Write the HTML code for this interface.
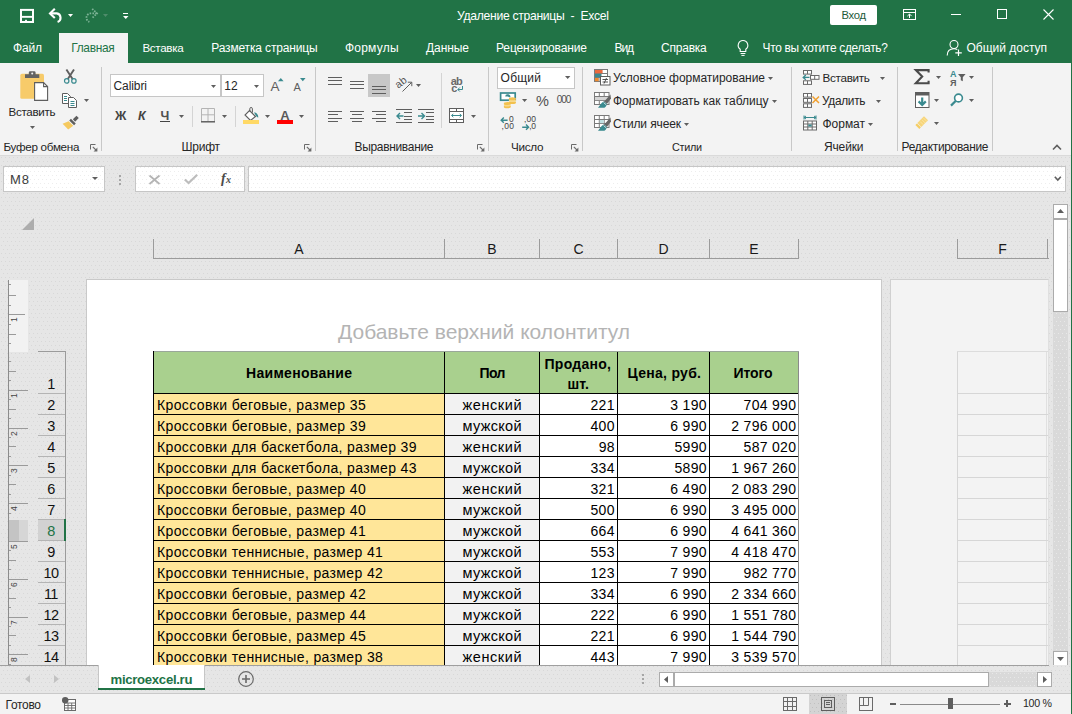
<!DOCTYPE html>
<html lang="ru">
<head>
<meta charset="utf-8">
<title>Excel</title>
<style>
*{box-sizing:border-box;margin:0;padding:0}
html,body{width:1072px;height:714px;overflow:hidden;background:#f3f3f3}
body{font-family:"Liberation Sans",sans-serif;font-size:12px;color:#262626;position:relative}
.abs{position:absolute}
svg{overflow:visible}
.t{position:absolute;white-space:pre;line-height:1}
</style>
</head>
<body>
<!-- TITLE BAR -->
<div class="abs" style="left:0px;top:0px;width:1072px;height:63px;background:#217346;"></div>
<div class="abs" style="left:59px;top:33px;width:69px;height:30px;background:#f3f3f3;"></div>
<svg class="abs" style="left:19px;top:8px;" width="16" height="16" viewBox="0 0 16 16"><rect x="2" y="1.9" width="12" height="12.1" fill="none" stroke="#fff" stroke-width="2"/><rect x="3" y="7.9" width="10" height="1.9" fill="#fff"/><rect x="6.1" y="11.8" width="1.8" height="2" fill="#fff"/></svg>
<svg class="abs" style="left:48px;top:8px;" width="16" height="15" viewBox="0 0 16 15"><path d="M2.2 5.4H8.8A4.4 4.4 0 0 1 9.6 13.9" fill="none" stroke="#fff" stroke-width="2.1"/><path d="M6.8 0.8L2 5.4L6.8 10" fill="none" stroke="#fff" stroke-width="2.1"/></svg>
<svg class="abs" style="left:68px;top:14px;" width="5" height="3" viewBox="0 0 5 3"><path d="M0 0H5L2.5 3Z" fill="#fff"/></svg>
<svg class="abs" style="left:83px;top:8px;" width="16" height="15" viewBox="0 0 16 15"><path d="M13.8 5.4H7.2A4.4 4.4 0 0 0 6.4 13.9" fill="none" stroke="#7db396" stroke-width="1.8" stroke-dasharray="1.6 1.2"/><path d="M9.2 0.8L14 5.4L9.2 10" fill="none" stroke="#7db396" stroke-width="1.8" stroke-dasharray="1.6 1.2"/></svg>
<svg class="abs" style="left:103px;top:14px;" width="5" height="3" viewBox="0 0 5 3"><path d="M0 0H5L2.5 3Z" fill="#4f8c6b"/></svg>
<div class="abs" style="left:122.5px;top:12.5px;width:5.5px;height:1.2px;background:#fff;"></div>
<svg class="abs" style="left:122.5px;top:15.5px;" width="5.5" height="3.0" viewBox="0 0 5.5 3.0"><path d="M0 0H5.5L2.75 3.0Z" fill="#fff"/></svg>
<span class="t" style="left:457.00px;top:10.00px;font-size:12.16px;color:#fff;letter-spacing:-0.301px;">Удаление страницы  -  Excel</span>
<div class="abs" style="left:830px;top:5px;width:47px;height:19.5px;background:#fff;border-radius:2px;"></div>
<span class="t" style="left:841.50px;top:10.00px;font-size:11.23px;color:#1e5a3a;letter-spacing:-0.302px;">Вход</span>
<svg class="abs" style="left:903px;top:9px;" width="13" height="11" viewBox="0 0 13 11"><rect x="0.5" y="0.5" width="12" height="10" fill="none" stroke="#fff" stroke-width="1"/><path d="M0.5 3.5H12.5" stroke="#fff" stroke-width="1"/><path d="M6.5 9V5.2M4.4 7.1L6.5 5L8.6 7.1" fill="none" stroke="#fff" stroke-width="1"/></svg>
<div class="abs" style="left:951px;top:14px;width:10px;height:1px;background:#fff;"></div>
<div class="abs" style="left:997px;top:9px;width:10px;height:10px;border:1px solid #fff"></div>
<svg class="abs" style="left:1042.5px;top:9px;" width="11" height="11" viewBox="0 0 11 11"><path d="M0.5 0.5L10.5 10.5M10.5 0.5L0.5 10.5" stroke="#fff" stroke-width="1.1"/></svg>
<span class="t" style="left:13.00px;top:42.00px;font-size:12px;color:#fff;letter-spacing:-0.167px;">Файл</span>
<span class="t" style="left:71.20px;top:43.00px;font-size:11.93px;color:#217346;letter-spacing:-0.301px;">Главная</span>
<span class="t" style="left:142.40px;top:42.00px;font-size:11.6px;color:#fff;letter-spacing:-0.303px;">Вставка</span>
<span class="t" style="left:211.20px;top:42.00px;font-size:12px;color:#fff;letter-spacing:-0.148px;">Разметка страницы</span>
<span class="t" style="left:345.00px;top:42.00px;font-size:12px;color:#fff;letter-spacing:0.214px;">Формулы</span>
<span class="t" style="left:426.00px;top:42.00px;font-size:12px;color:#fff;letter-spacing:-0.071px;">Данные</span>
<span class="t" style="left:496.00px;top:42.00px;font-size:12px;color:#fff;letter-spacing:-0.128px;">Рецензирование</span>
<span class="t" style="left:614.50px;top:42.00px;font-size:12px;color:#fff;letter-spacing:-1.105px;">Вид</span>
<span class="t" style="left:661.00px;top:42.00px;font-size:12px;color:#fff;letter-spacing:-0.221px;">Справка</span>
<svg class="abs" style="left:736px;top:39px;" width="14" height="18" viewBox="0 0 14 18"><path d="M7 1.5A4.8 4.8 0 0 0 4.2 10.2V12.5H9.8V10.2A4.8 4.8 0 0 0 7 1.5Z" fill="none" stroke="#fff" stroke-width="1.1"/><path d="M4.6 14.5H9.4M5.4 16.4H8.6" stroke="#fff" stroke-width="1"/></svg>
<span class="t" style="left:762.50px;top:43.00px;font-size:11.92px;color:#fff;letter-spacing:-0.299px;">Что вы хотите сделать?</span>
<svg class="abs" style="left:946px;top:39px;" width="18" height="18" viewBox="0 0 18 18"><circle cx="8" cy="5.5" r="4" fill="none" stroke="#fff" stroke-width="1.1"/><path d="M1.2 16.5C1.2 12 4 9.8 8 9.8C9.5 9.8 10.5 10.1 11.3 10.6" fill="none" stroke="#fff" stroke-width="1.1"/><path d="M12.5 10.5V17M9.3 13.8H15.8" stroke="#fff" stroke-width="1.2"/></svg>
<span class="t" style="left:966.50px;top:42.00px;font-size:12px;color:#fff;letter-spacing:-0.011px;">Общий доступ</span>
<!-- RIBBON -->
<div class="abs" style="left:0px;top:63px;width:1072px;height:92px;background:#f3f3f3;"></div>
<div class="abs" style="left:0px;top:154.5px;width:1072px;height:1px;background:#dadada;"></div>
<svg class="abs" style="left:20px;top:70px;" width="29" height="32" viewBox="0 0 29 32"><rect x="0.3" y="3.8" width="23.7" height="25" rx="1.6" fill="#f7cb6a"/><path d="M5 7.9V4.2H8.8V2.6A1.4 1.4 0 0 1 10.2 1.2H14.2A1.4 1.4 0 0 1 15.6 2.6V4.2H19.3V7.9Z" fill="#636363"/><circle cx="12.2" cy="3.5" r="1" fill="#f3f3f3"/><path d="M14.6 12.6H23.6L27.6 16.6V30.4H14.6Z" fill="#fff" stroke="#5e5e5e" stroke-width="1.1"/><path d="M23.6 12.6V16.6H27.6" fill="none" stroke="#5e5e5e" stroke-width="1.1"/></svg>
<span class="t" style="left:8.50px;top:107.00px;font-size:11.58px;color:#262626;letter-spacing:-0.298px;">Вставить</span>
<svg class="abs" style="left:30px;top:126px;" width="5" height="3" viewBox="0 0 5 3"><path d="M0 0H5L2.5 3Z" fill="#5e5e5e"/></svg>
<svg class="abs" style="left:63px;top:69px;" width="15" height="16" viewBox="0 0 15 16"><path d="M3.4 0.6L9.6 10M11 0.6L4.8 10" stroke="#5e5e5e" stroke-width="1.9" fill="none"/><circle cx="3.7" cy="11.9" r="2.2" fill="none" stroke="#3a8a8f" stroke-width="1.2"/><circle cx="10.9" cy="11.9" r="2.2" fill="none" stroke="#3a8a8f" stroke-width="1.2"/></svg>
<svg class="abs" style="left:62px;top:92.6px;" width="16" height="15" viewBox="0 0 16 15"><path d="M0.5 0.5H5.5L8.5 3.5V10.5H0.5Z" fill="#fff" stroke="#5e5e5e"/><path d="M6.5 4.5H11.5L14.5 7.5V14.5H6.5Z" fill="#fff" stroke="#5e5e5e"/><path d="M2 3.5H5M2 5.5H5M2 7.5H5M8.5 8.5H12.5M8.5 10.5H12.5M8.5 12.5H12.5" stroke="#3a8a8f" stroke-width="1"/></svg>
<svg class="abs" style="left:84px;top:99px;" width="5" height="3" viewBox="0 0 5 3"><path d="M0 0H5L2.5 3Z" fill="#5e5e5e"/></svg>
<svg class="abs" style="left:62px;top:115px;" width="17" height="16" viewBox="0 0 17 16"><path d="M15.6 1.9L12 5.5" stroke="#5e5e5e" stroke-width="3.2" fill="none"/><path d="M8.1 4.6L12.9 9.4" stroke="#5e5e5e" stroke-width="2.4" fill="none"/><path d="M6.6 6.2L11.2 10.8L6.2 14.6L0.6 8.8Z" fill="#f5c95f"/></svg>
<span class="t" style="left:3.50px;top:141.00px;font-size:11.67px;color:#262626;letter-spacing:-0.300px;">Буфер обмена</span>
<svg class="abs" style="left:90px;top:144px;" width="8" height="8" viewBox="0 0 8 8"><path d="M0.5 5.5V0.5H5.5" fill="none" stroke="#6a6a6a" stroke-width="1"/><path d="M2.8 2.8L6 6" fill="none" stroke="#6a6a6a" stroke-width="1.1"/><path d="M7.4 3.6V7.4H3.6Z" fill="#6a6a6a"/></svg>
<div class="abs" style="left:101px;top:67px;width:1px;height:84px;background:#c8c8c8;"></div>
<div class="abs" style="left:110px;top:74px;width:111px;height:23px;background:#fff;border:1px solid #c6c6c6"></div>
<div class="abs" style="left:221px;top:74px;width:43px;height:23px;background:#fff;border:1px solid #c6c6c6"></div>
<span class="t" style="left:113.50px;top:80.00px;font-size:12px;color:#262626;letter-spacing:-0.085px;">Calibri</span>
<svg class="abs" style="left:211px;top:84.5px;" width="5" height="3" viewBox="0 0 5 3"><path d="M0 0H5L2.5 3Z" fill="#5e5e5e"/></svg>
<span class="t" style="left:224.30px;top:80.00px;font-size:12px;color:#262626;">12</span>
<svg class="abs" style="left:254px;top:84.5px;" width="5" height="3" viewBox="0 0 5 3"><path d="M0 0H5L2.5 3Z" fill="#5e5e5e"/></svg>
<span class="t" style="left:270.50px;top:80.00px;font-size:13.5px;color:#5e5e5e;letter-spacing:0.495px;">A</span>
<svg class="abs" style="left:277.8px;top:77.8px;" width="5.6" height="3.2" viewBox="0 0 5.6 3.2"><path d="M0 3.2L2.8 0L5.6 3.2Z" fill="#3a8a8f"/></svg>
<span class="t" style="left:293.50px;top:82.00px;font-size:11px;color:#5e5e5e;letter-spacing:0.163px;">A</span>
<svg class="abs" style="left:299.6px;top:77.8px;" width="5.6" height="3.2" viewBox="0 0 5.6 3.2"><path d="M0 0H5.6L2.8 3.2Z" fill="#3a8a8f"/></svg>
<span class="t" style="left:115.00px;top:110.00px;font-size:12.5px;color:#444;letter-spacing:0.702px;font-weight:bold;">Ж</span>
<span class="t" style="left:138.00px;top:110.00px;font-size:12.5px;color:#444;letter-spacing:0.816px;font-weight:bold;font-style:italic;">К</span>
<span class="t" style="left:160.50px;top:110.00px;font-size:12.5px;color:#505050;letter-spacing:-0.283px;font-weight:bold;">Ч</span>
<div class="abs" style="left:160px;top:121px;width:9.5px;height:1.2px;background:#444;"></div>
<svg class="abs" style="left:179px;top:115px;" width="5" height="3" viewBox="0 0 5 3"><path d="M0 0H5L2.5 3Z" fill="#5e5e5e"/></svg>
<div class="abs" style="left:192px;top:106px;width:1px;height:21px;background:#d4d4d4;"></div>
<svg class="abs" style="left:201px;top:108px;" width="14" height="15" viewBox="0 0 14 15"><path d="M0.5 0.5H13.5M0.5 0.5V13M13.5 0.5V13M7 0.5V13M0.5 6.8H13.5" stroke="#b4b4b4" stroke-width="1" fill="none"/><path d="M0 13.8H14" stroke="#555" stroke-width="1.4"/></svg>
<svg class="abs" style="left:222px;top:115px;" width="5" height="3" viewBox="0 0 5 3"><path d="M0 0H5L2.5 3Z" fill="#5e5e5e"/></svg>
<div class="abs" style="left:235px;top:106px;width:1px;height:21px;background:#d4d4d4;"></div>
<svg class="abs" style="left:243px;top:107px;" width="17" height="18" viewBox="0 0 17 18"><path d="M6.5 3.5L12.5 9.5L7.5 13.5L2 8Z" fill="#fff" stroke="#5e5e5e" stroke-width="1.1"/><path d="M6.8 4.5V1.8A1.3 1.3 0 0 1 9.4 1.8V5.6" fill="none" stroke="#5e5e5e" stroke-width="1"/><path d="M11 5.5C13.5 5.5 15.5 7.5 15.2 10.8L13.2 9.2Z" fill="#3a8a8f"/><rect x="0" y="13" width="16" height="4" fill="#ffd966"/></svg>
<svg class="abs" style="left:265px;top:115px;" width="5" height="3" viewBox="0 0 5 3"><path d="M0 0H5L2.5 3Z" fill="#5e5e5e"/></svg>
<span class="t" style="left:280.20px;top:109.00px;font-size:13px;color:#5a5a5a;letter-spacing:1.012px;font-weight:bold;">A</span>
<div class="abs" style="left:277px;top:120px;width:16px;height:4px;background:#f00;"></div>
<svg class="abs" style="left:299px;top:115px;" width="5" height="3" viewBox="0 0 5 3"><path d="M0 0H5L2.5 3Z" fill="#5e5e5e"/></svg>
<span class="t" style="left:181.50px;top:141.00px;font-size:12px;color:#262626;letter-spacing:-0.245px;">Шрифт</span>
<svg class="abs" style="left:304px;top:144px;" width="8" height="8" viewBox="0 0 8 8"><path d="M0.5 5.5V0.5H5.5" fill="none" stroke="#6a6a6a" stroke-width="1"/><path d="M2.8 2.8L6 6" fill="none" stroke="#6a6a6a" stroke-width="1.1"/><path d="M7.4 3.6V7.4H3.6Z" fill="#6a6a6a"/></svg>
<div class="abs" style="left:315px;top:67px;width:1px;height:84px;background:#c8c8c8;"></div>
<div class="abs" style="left:328px;top:77px;width:14px;height:1px;background:#5e5e5e;"></div>
<div class="abs" style="left:328px;top:80px;width:14px;height:1px;background:#5e5e5e;"></div>
<div class="abs" style="left:328px;top:84px;width:14px;height:1px;background:#5e5e5e;"></div>
<div class="abs" style="left:350px;top:81px;width:14px;height:1px;background:#5e5e5e;"></div>
<div class="abs" style="left:350px;top:84px;width:14px;height:1px;background:#5e5e5e;"></div>
<div class="abs" style="left:350px;top:88px;width:14px;height:1px;background:#5e5e5e;"></div>
<div class="abs" style="left:368px;top:74px;width:22px;height:22.5px;background:#c8c8c8;"></div>
<div class="abs" style="left:372px;top:86px;width:14px;height:1px;background:#5e5e5e;"></div>
<div class="abs" style="left:372px;top:89px;width:14px;height:1px;background:#5e5e5e;"></div>
<div class="abs" style="left:372px;top:93px;width:14px;height:1px;background:#5e5e5e;"></div>
<svg class="abs" style="left:396px;top:76px;" width="17" height="17" viewBox="0 0 17 17">"<text x="0" y="10" font-size="10.5" font-family="Liberation Sans" fill="#555" transform="rotate(-38 5 8)">ab</text><path d="M6.5 15.5L15.5 6.5M15.8 10.2V6.2H11.8" fill="none" stroke="#5e5e5e" stroke-width="1"/></svg>
<svg class="abs" style="left:416.3px;top:84px;" width="5" height="3" viewBox="0 0 5 3"><path d="M0 0H5L2.5 3Z" fill="#5e5e5e"/></svg>
<div class="abs" style="left:441px;top:73px;width:1px;height:55px;background:#d4d4d4;"></div>
<span class="t" style="left:450.80px;top:76.00px;font-size:11px;color:#6a6a6a;letter-spacing:-0.837px;font-weight:bold;">ab</span>
<span class="t" style="left:451.30px;top:83.00px;font-size:11px;color:#6a6a6a;font-weight:bold;">c</span>
<svg class="abs" style="left:457px;top:86px;" width="6" height="6" viewBox="0 0 6 6"><path d="M5.5 0V3.5H1M2.8 1.5L0.8 3.5L2.8 5.5" fill="none" stroke="#3a8a8f" stroke-width="1"/></svg>
<div class="abs" style="left:328px;top:111px;width:14px;height:1px;background:#5e5e5e;"></div>
<div class="abs" style="left:328px;top:114px;width:10px;height:1px;background:#5e5e5e;"></div>
<div class="abs" style="left:328px;top:118px;width:14px;height:1px;background:#5e5e5e;"></div>
<div class="abs" style="left:328px;top:121px;width:10px;height:1px;background:#5e5e5e;"></div>
<div class="abs" style="left:350px;top:111px;width:14px;height:1px;background:#5e5e5e;"></div>
<div class="abs" style="left:352px;top:114px;width:10px;height:1px;background:#5e5e5e;"></div>
<div class="abs" style="left:350px;top:118px;width:14px;height:1px;background:#5e5e5e;"></div>
<div class="abs" style="left:352px;top:121px;width:10px;height:1px;background:#5e5e5e;"></div>
<div class="abs" style="left:372px;top:111px;width:14px;height:1px;background:#5e5e5e;"></div>
<div class="abs" style="left:376px;top:114px;width:10px;height:1px;background:#5e5e5e;"></div>
<div class="abs" style="left:372px;top:118px;width:14px;height:1px;background:#5e5e5e;"></div>
<div class="abs" style="left:376px;top:121px;width:10px;height:1px;background:#5e5e5e;"></div>
<div class="abs" style="left:396px;top:109px;width:16px;height:1px;background:#5e5e5e;"></div>
<div class="abs" style="left:404px;top:112px;width:8px;height:1px;background:#5e5e5e;"></div>
<div class="abs" style="left:404px;top:116px;width:8px;height:1px;background:#5e5e5e;"></div>
<div class="abs" style="left:404px;top:119px;width:8px;height:1px;background:#5e5e5e;"></div>
<div class="abs" style="left:396px;top:122px;width:16px;height:1px;background:#5e5e5e;"></div>
<svg class="abs" style="left:396px;top:112px;" width="8" height="8" viewBox="0 0 8 8"><path d="M7.5 4H1M4 1L1 4L4 7" fill="none" stroke="#3a8a8f" stroke-width="1.4"/></svg>
<div class="abs" style="left:418px;top:109px;width:16px;height:1px;background:#5e5e5e;"></div>
<div class="abs" style="left:426px;top:112px;width:8px;height:1px;background:#5e5e5e;"></div>
<div class="abs" style="left:426px;top:116px;width:8px;height:1px;background:#5e5e5e;"></div>
<div class="abs" style="left:426px;top:119px;width:8px;height:1px;background:#5e5e5e;"></div>
<div class="abs" style="left:418px;top:122px;width:16px;height:1px;background:#5e5e5e;"></div>
<svg class="abs" style="left:418px;top:112px;" width="8" height="8" viewBox="0 0 8 8"><path d="M0 4H6.5M3.5 1L6.5 4L3.5 7" fill="none" stroke="#3a8a8f" stroke-width="1.4"/></svg>
<svg class="abs" style="left:449px;top:108px;" width="15" height="15" viewBox="0 0 15 15"><rect x="0.5" y="0.5" width="14" height="14" fill="#fff" stroke="#5e5e5e"/><path d="M0.5 3.5H14.5M0.5 11.5H14.5M7.5 0.5V3.5M7.5 11.5V14.5" stroke="#5e5e5e" fill="none"/><path d="M2.6 7.5H12.4M4.3 5.8L2.6 7.5L4.3 9.2M10.7 5.8L12.4 7.5L10.7 9.2" stroke="#3a8a8f" fill="none" stroke-width="1"/></svg>
<svg class="abs" style="left:471px;top:115px;" width="5" height="3" viewBox="0 0 5 3"><path d="M0 0H5L2.5 3Z" fill="#5e5e5e"/></svg>
<span class="t" style="left:354.50px;top:142.00px;font-size:11.96px;color:#262626;letter-spacing:-0.302px;">Выравнивание</span>
<svg class="abs" style="left:477px;top:144px;" width="8" height="8" viewBox="0 0 8 8"><path d="M0.5 5.5V0.5H5.5" fill="none" stroke="#6a6a6a" stroke-width="1"/><path d="M2.8 2.8L6 6" fill="none" stroke="#6a6a6a" stroke-width="1.1"/><path d="M7.4 3.6V7.4H3.6Z" fill="#6a6a6a"/></svg>
<div class="abs" style="left:488px;top:67px;width:1px;height:84px;background:#c8c8c8;"></div>
<div class="abs" style="left:497px;top:67px;width:78px;height:22px;background:#fff;border:1px solid #c6c6c6"></div>
<span class="t" style="left:500.60px;top:72.00px;font-size:12px;color:#262626;letter-spacing:0.228px;">Общий</span>
<svg class="abs" style="left:565px;top:76px;" width="5.4" height="3.0" viewBox="0 0 5.4 3.0"><path d="M0 0H5.4L2.7 3.0Z" fill="#5e5e5e"/></svg>
<svg class="abs" style="left:499px;top:92px;" width="18" height="17" viewBox="0 0 18 17"><rect x="1.6" y="1" width="14.6" height="7.2" fill="#fff" stroke="#3a8a8f" stroke-width="1.7"/><path d="M6.2 4.6A2.6 2.4 0 1 1 11.2 5.6L8.8 4.6Z" fill="#3a8a8f"/><ellipse cx="13.4" cy="10.6" rx="3.6" ry="1.5" fill="#f2c14e"/><ellipse cx="13.4" cy="8.6" rx="3.6" ry="1.5" fill="#f7d98c"/><ellipse cx="13.4" cy="6.8" rx="3.6" ry="1.5" fill="#f2c14e"/><ellipse cx="8.4" cy="14.8" rx="3.6" ry="1.5" fill="#f2c14e"/><ellipse cx="8.4" cy="13" rx="3.6" ry="1.5" fill="#f7d98c"/><ellipse cx="8.4" cy="11.4" rx="3.6" ry="1.5" fill="#f2c14e"/></svg>
<svg class="abs" style="left:522px;top:99px;" width="5.2" height="3.0" viewBox="0 0 5.2 3.0"><path d="M0 0H5.2L2.6 3.0Z" fill="#5e5e5e"/></svg>
<span class="t" style="left:536.00px;top:94.00px;font-size:14.5px;color:#505050;letter-spacing:0.107px;">%</span>
<span class="t" style="left:556.70px;top:95.00px;font-size:10px;color:#505050;letter-spacing:-1.092px;">000</span>
<svg class="abs" style="left:499.5px;top:116.5px;" width="8" height="6.5" viewBox="0 0 8 6.5"><path d="M7.6 3.2H1.2M3.8 0.6L1.2 3.2L3.8 5.8" fill="none" stroke="#3a8a8f" stroke-width="1.4"/></svg>
<span class="t" style="left:509.00px;top:115.00px;font-size:8.5px;color:#444;letter-spacing:0.273px;">0</span>
<span class="t" style="left:501.60px;top:122.00px;font-size:8.5px;color:#444;letter-spacing:0.292px;">,00</span>
<span class="t" style="left:524.10px;top:115.00px;font-size:8.5px;color:#444;letter-spacing:0.042px;">,00</span>
<svg class="abs" style="left:521.8px;top:123.5px;" width="8" height="6.5" viewBox="0 0 8 6.5"><path d="M0.2 3.2H6.6M4 0.6L6.6 3.2L4 5.8" fill="none" stroke="#3a8a8f" stroke-width="1.4"/></svg>
<span class="t" style="left:529.20px;top:122.00px;font-size:8.5px;color:#444;letter-spacing:-0.289px;">,0</span>
<span class="t" style="left:511.00px;top:141.00px;font-size:11.72px;color:#262626;letter-spacing:-0.302px;">Число</span>
<svg class="abs" style="left:571px;top:144px;" width="8" height="8" viewBox="0 0 8 8"><path d="M0.5 5.5V0.5H5.5" fill="none" stroke="#6a6a6a" stroke-width="1"/><path d="M2.8 2.8L6 6" fill="none" stroke="#6a6a6a" stroke-width="1.1"/><path d="M7.4 3.6V7.4H3.6Z" fill="#6a6a6a"/></svg>
<div class="abs" style="left:582px;top:67px;width:1px;height:84px;background:#c8c8c8;"></div>
<svg class="abs" style="left:594px;top:69px;" width="17" height="17" viewBox="0 0 17 17"><rect x="0.5" y="0.5" width="13" height="12" fill="#fff" stroke="#7a7a7a"/><path d="M0.5 4.5H13.5M0.5 8.5H13.5M5 0.5V12.5" stroke="#7a7a7a" fill="none"/><rect x="1" y="1" width="7.6" height="3.2" fill="#ea6a3e"/><rect x="1" y="5" width="6.5" height="3.2" fill="#3a8a8f"/><rect x="1" y="9" width="3.6" height="3.2" fill="#f08a2c"/><rect x="6.5" y="7.5" width="9.5" height="8.5" fill="#fff" stroke="#5e5e5e"/><path d="M8.5 10.5H14M8.5 13H14M12.5 9L10 14.6" stroke="#444" stroke-width="0.9" fill="none"/></svg>
<span class="t" style="left:613.00px;top:72.00px;font-size:12px;color:#262626;letter-spacing:-0.030px;">Условное форматирование</span>
<svg class="abs" style="left:768px;top:76.5px;" width="5" height="3" viewBox="0 0 5 3"><path d="M0 0H5L2.5 3Z" fill="#5e5e5e"/></svg>
<svg class="abs" style="left:594px;top:92px;" width="17" height="17" viewBox="0 0 17 17"><rect x="0.5" y="0.5" width="14.5" height="12" fill="#fff" stroke="#7a7a7a"/><path d="M0.5 4.5H15M0.5 8.5H15M5.3 0.5V12.5M10.2 0.5V12.5" stroke="#7a7a7a" fill="none"/><rect x="1" y="5" width="14" height="3.2" fill="#d5d5d5"/><path d="M16.4 2.6L10.2 9.6L12.9 11.9L17 6.4Z" fill="#666"/><path d="M10 9.6C7 10.5 6.5 13 4 15.8H10.4C12 14.6 12.6 13.4 13 12Z" fill="#3a8a8f"/><path d="M9.6 10.6L12.2 12.8" stroke="#f3f3f3" stroke-width="0.8"/></svg>
<span class="t" style="left:613.00px;top:95.00px;font-size:12px;color:#262626;letter-spacing:-0.026px;">Форматировать как таблицу</span>
<svg class="abs" style="left:772px;top:99.5px;" width="5" height="3" viewBox="0 0 5 3"><path d="M0 0H5L2.5 3Z" fill="#5e5e5e"/></svg>
<svg class="abs" style="left:594px;top:115px;" width="17" height="17" viewBox="0 0 17 17"><rect x="0.5" y="0.5" width="14.5" height="12" fill="#fff" stroke="#7a7a7a"/><path d="M0.5 4.5H15M0.5 8.5H15M5.3 0.5V12.5M10.2 0.5V12.5" stroke="#7a7a7a" fill="none"/><rect x="5.8" y="5" width="4" height="3.2" fill="#bfe0e2"/><path d="M16.4 2.6L10.2 9.6L12.9 11.9L17 6.4Z" fill="#666"/><path d="M10 9.6C7 10.5 6.5 13 4 15.8H10.4C12 14.6 12.6 13.4 13 12Z" fill="#3a8a8f"/><path d="M9.6 10.6L12.2 12.8" stroke="#f3f3f3" stroke-width="0.8"/></svg>
<span class="t" style="left:613.00px;top:118.00px;font-size:12px;color:#262626;letter-spacing:-0.125px;">Стили ячеек</span>
<svg class="abs" style="left:684px;top:122.5px;" width="5" height="3" viewBox="0 0 5 3"><path d="M0 0H5L2.5 3Z" fill="#5e5e5e"/></svg>
<span class="t" style="left:672.00px;top:142.00px;font-size:10.83px;color:#262626;letter-spacing:-0.300px;">Стили</span>
<div class="abs" style="left:791px;top:67px;width:1px;height:84px;background:#c8c8c8;"></div>
<svg class="abs" style="left:802px;top:69.5px;" width="18" height="15" viewBox="0 0 18 15"><rect x="1.5" y="0.5" width="8" height="3.6" fill="#fff" stroke="#6a6a6a"/><path d="M5.5 0.5V4" stroke="#6a6a6a"/><rect x="8.5" y="5.5" width="8.5" height="3.8" fill="#fff" stroke="#6a6a6a"/><path d="M12.7 5.5V9.3" stroke="#6a6a6a"/><rect x="1.5" y="10.8" width="8" height="3.6" fill="#fff" stroke="#6a6a6a"/><path d="M5.5 10.8V14.4" stroke="#6a6a6a"/><path d="M7.5 7.4H1.2M3.8 5L1.2 7.4L3.8 9.8" fill="none" stroke="#3a8a8f" stroke-width="1.3"/></svg>
<span class="t" style="left:822.50px;top:72.00px;font-size:11.7px;color:#262626;letter-spacing:-0.299px;">Вставить</span>
<svg class="abs" style="left:880px;top:76.5px;" width="5" height="3" viewBox="0 0 5 3"><path d="M0 0H5L2.5 3Z" fill="#5e5e5e"/></svg>
<svg class="abs" style="left:802px;top:92.5px;" width="18" height="15" viewBox="0 0 18 15"><rect x="1.5" y="0.5" width="8" height="3.6" fill="#fff" stroke="#6a6a6a"/><path d="M5.5 0.5V4" stroke="#6a6a6a"/><rect x="1.5" y="5.5" width="8" height="3.8" fill="#fff" stroke="#6a6a6a"/><path d="M5.5 5.5V9.3" stroke="#6a6a6a"/><rect x="1.5" y="10.8" width="8" height="3.6" fill="#fff" stroke="#6a6a6a"/><path d="M5.5 10.8V14.4" stroke="#6a6a6a"/><path d="M10.5 3.5L17 10M17 3.5L10.5 10" stroke="#f0a030" stroke-width="1.5"/></svg>
<span class="t" style="left:822.00px;top:96.00px;font-size:11.87px;color:#262626;letter-spacing:-0.303px;">Удалить</span>
<svg class="abs" style="left:876px;top:99.5px;" width="5" height="3" viewBox="0 0 5 3"><path d="M0 0H5L2.5 3Z" fill="#5e5e5e"/></svg>
<svg class="abs" style="left:802px;top:115px;" width="18" height="16" viewBox="0 0 18 16"><path d="M2 2.5H14M2 0.5V4.5M14 0.5V4.5M4 1L2 2.5L4 4M12 1L14 2.5L12 4" stroke="#3a8a8f" fill="none" stroke-width="1"/><rect x="1.5" y="6" width="13" height="9" fill="#fff" stroke="#6a6a6a"/><path d="M1.5 9H14.5M1.5 12H14.5M5.8 6V15M10.2 6V15" stroke="#6a6a6a"/><rect x="6.3" y="9.5" width="3.4" height="2" fill="#3a8a8f"/></svg>
<span class="t" style="left:822.50px;top:118.00px;font-size:12px;color:#262626;letter-spacing:-0.025px;">Формат</span>
<svg class="abs" style="left:868px;top:122.5px;" width="5" height="3" viewBox="0 0 5 3"><path d="M0 0H5L2.5 3Z" fill="#5e5e5e"/></svg>
<span class="t" style="left:824.00px;top:141.00px;font-size:12px;color:#262626;letter-spacing:-0.150px;">Ячейки</span>
<div class="abs" style="left:897px;top:67px;width:1px;height:84px;background:#c8c8c8;"></div>
<svg class="abs" style="left:914px;top:69px;" width="16" height="16" viewBox="0 0 16 16"><path d="M14.6 3.6V1.1H1.8L8.2 7.6L1.8 14.3H14.6V11.8" fill="none" stroke="#4a4a4a" stroke-width="2.1"/></svg>
<svg class="abs" style="left:936px;top:76px;" width="5" height="3" viewBox="0 0 5 3"><path d="M0 0H5L2.5 3Z" fill="#5e5e5e"/></svg>
<span class="t" style="left:950.00px;top:70.00px;font-size:9px;color:#3a8a8f;letter-spacing:-0.500px;font-weight:bold;">A</span>
<span class="t" style="left:950.00px;top:79.00px;font-size:9px;color:#5e5e5e;letter-spacing:-0.469px;font-weight:bold;">Я</span>
<svg class="abs" style="left:957.5px;top:74px;" width="9" height="8" viewBox="0 0 9 8"><path d="M0 0H7.6L4.8 3.2V7.2L2.8 6.2V3.2Z" fill="#5e5e5e"/></svg>
<svg class="abs" style="left:969px;top:76px;" width="5" height="3" viewBox="0 0 5 3"><path d="M0 0H5L2.5 3Z" fill="#5e5e5e"/></svg>
<svg class="abs" style="left:915px;top:92px;" width="15" height="16" viewBox="0 0 15 16"><rect x="0.5" y="0.5" width="13.5" height="15" fill="#fff" stroke="#5e5e5e"/><rect x="0.5" y="0.5" width="13.5" height="3" fill="#5e5e5e"/><path d="M7.2 5.5V13M3.6 9.4L7.2 13L10.8 9.4" fill="none" stroke="#3a8a8f" stroke-width="2.2"/></svg>
<svg class="abs" style="left:934px;top:99px;" width="5" height="3" viewBox="0 0 5 3"><path d="M0 0H5L2.5 3Z" fill="#5e5e5e"/></svg>
<svg class="abs" style="left:950px;top:93px;" width="14" height="14" viewBox="0 0 14 14"><circle cx="8.5" cy="5" r="3.9" fill="#fff" stroke="#3a8a8f" stroke-width="1.6"/><path d="M5.6 8L1 12.6" stroke="#3a8a8f" stroke-width="2.2"/></svg>
<svg class="abs" style="left:969px;top:99px;" width="5" height="3" viewBox="0 0 5 3"><path d="M0 0H5L2.5 3Z" fill="#5e5e5e"/></svg>
<svg class="abs" style="left:915px;top:116px;" width="14" height="14" viewBox="0 0 14 14"><path d="M9 0.3L13 4.3L6.3 11L2.3 7Z" fill="#f7d57a"/><path d="M2 7.4L5.9 11.3L4.4 12.9L0.4 8.9Z" fill="#f5cd63"/><path d="M5.2 5.6L8.4 8.8M7 3.8L10.2 7M8.6 2.2L11.8 5.4" stroke="#fbe9b5" stroke-width="0.7"/></svg>
<svg class="abs" style="left:934px;top:122px;" width="5" height="3" viewBox="0 0 5 3"><path d="M0 0H5L2.5 3Z" fill="#5e5e5e"/></svg>
<span class="t" style="left:901.50px;top:142.00px;font-size:11.93px;color:#262626;letter-spacing:-0.298px;">Редактирование</span>
<div class="abs" style="left:992px;top:67px;width:1px;height:84px;background:#c8c8c8;"></div>
<svg class="abs" style="left:1052px;top:144px;" width="10" height="7" viewBox="0 0 10 7"><path d="M1 5.5L5 1.5L9 5.5" fill="none" stroke="#5e5e5e" stroke-width="1.6"/></svg>
<!-- FORMULA BAR + SHEET BG -->
<svg class="abs" style="left:0px;top:155.5px" width="1071" height="510" shape-rendering="crispEdges"><defs><pattern id="pd" width="4" height="8" patternUnits="userSpaceOnUse"><rect width="4" height="8" fill="#e6e6e6"/><rect x="1" y="1" width="1" height="1" fill="#d8d8d8"/><rect x="3" y="5" width="1" height="1" fill="#d8d8d8"/></pattern></defs><rect width="1071" height="510" fill="url(#pd)"/></svg>
<svg class="abs" style="left:3px;top:166px" width="102" height="26" shape-rendering="crispEdges"><defs><pattern id="pw" width="4" height="8" patternUnits="userSpaceOnUse"><rect width="4" height="8" fill="#fff"/><rect x="1" y="1" width="1" height="1" fill="#ededed"/><rect x="3" y="5" width="1" height="1" fill="#ededed"/></pattern></defs><rect width="102" height="26" fill="url(#pw)"/><rect x="0.5" y="0.5" width="101" height="25" fill="none" stroke="#c6c6c6" stroke-width="1"/></svg>
<span class="t" style="left:10.00px;top:173.00px;font-size:13px;color:#3c3c3c;letter-spacing:0.941px;">M8</span>
<svg class="abs" style="left:91.5px;top:176.5px;" width="6" height="3" viewBox="0 0 6 3"><path d="M0 0H6L3.0 3Z" fill="#5e5e5e"/></svg>
<div class="abs" style="left:119px;top:174.5px;width:2px;height:2px;background:#a6a6a6;"></div>
<div class="abs" style="left:119px;top:178.5px;width:2px;height:2px;background:#a6a6a6;"></div>
<div class="abs" style="left:119px;top:182.5px;width:2px;height:2px;background:#a6a6a6;"></div>
<svg class="abs" style="left:135px;top:166px" width="110" height="26" shape-rendering="crispEdges"><defs><pattern id="pw2" width="4" height="8" patternUnits="userSpaceOnUse"><rect width="4" height="8" fill="#fff"/><rect x="1" y="1" width="1" height="1" fill="#ededed"/><rect x="3" y="5" width="1" height="1" fill="#ededed"/></pattern></defs><rect width="110" height="26" fill="url(#pw2)"/><rect x="0.5" y="0.5" width="109" height="25" fill="none" stroke="#c6c6c6" stroke-width="1"/></svg>
<svg class="abs" style="left:148.5px;top:174.5px;" width="11" height="9.5" viewBox="0 0 11 9.5"><path d="M0.5 0.5L10.5 9M10.5 0.5L0.5 9" stroke="#b4b4b4" stroke-width="1.8"/></svg>
<svg class="abs" style="left:183.5px;top:174px;" width="14" height="10" viewBox="0 0 14 10"><path d="M0.8 5.5L4.6 9L13.2 0.8" fill="none" stroke="#bdbdbd" stroke-width="2.2"/></svg>
<span class="t" style="left:221.00px;top:172.00px;font-size:14px;color:#4a4a4a;letter-spacing:0.338px;font-weight:bold;font-style:italic;font-family:'Liberation Serif',serif;">f</span>
<span class="t" style="left:226.00px;top:175.00px;font-size:10px;color:#4a4a4a;letter-spacing:1.000px;font-weight:bold;font-style:italic;font-family:'Liberation Serif',serif;">x</span>
<svg class="abs" style="left:248px;top:166px" width="818" height="26" shape-rendering="crispEdges"><defs><pattern id="pw3" width="4" height="8" patternUnits="userSpaceOnUse"><rect width="4" height="8" fill="#fff"/><rect x="1" y="1" width="1" height="1" fill="#ededed"/><rect x="3" y="5" width="1" height="1" fill="#ededed"/></pattern></defs><rect width="818" height="26" fill="url(#pw3)"/><rect x="0.5" y="0.5" width="817" height="25" fill="none" stroke="#c6c6c6" stroke-width="1"/></svg>
<svg class="abs" style="left:1054px;top:176px;" width="8" height="6" viewBox="0 0 8 6"><path d="M0.8 0.8L3.8 4L6.8 0.8" fill="none" stroke="#5e5e5e" stroke-width="1.6"/></svg>
<div class="abs" style="left:1071px;top:63px;width:1px;height:651px;background:#217346;"></div>
<!-- SHEET -->
<div class="abs" style="left:0;top:200px;width:1071px;height:465px;overflow:hidden"><div class="abs" style="left:0;top:-200px;width:1071px;height:714px">
<svg class="abs" style="left:22px;top:218px;" width="12" height="12" viewBox="0 0 12 12"><path d="M12 0V12H0Z" fill="#adadad"/></svg>
<div class="abs" style="left:153px;top:258px;width:646px;height:1px;background:#9b9b9b;"></div>
<div class="abs" style="left:153px;top:239px;width:1px;height:19px;background:#9b9b9b;"></div>
<span class="t" style="left:294.33px;top:242.00px;font-size:14px;color:#1a1a1a;">A</span>
<div class="abs" style="left:444px;top:239px;width:1px;height:19px;background:#9b9b9b;"></div>
<span class="t" style="left:487.33px;top:242.00px;font-size:14px;color:#1a1a1a;">B</span>
<div class="abs" style="left:539px;top:239px;width:1px;height:19px;background:#9b9b9b;"></div>
<span class="t" style="left:573.44px;top:242.00px;font-size:14px;color:#1a1a1a;">C</span>
<div class="abs" style="left:617px;top:239px;width:1px;height:19px;background:#9b9b9b;"></div>
<span class="t" style="left:658.44px;top:242.00px;font-size:14px;color:#1a1a1a;">D</span>
<div class="abs" style="left:709px;top:239px;width:1px;height:19px;background:#9b9b9b;"></div>
<span class="t" style="left:749.33px;top:242.00px;font-size:14px;color:#1a1a1a;">E</span>
<div class="abs" style="left:798px;top:239px;width:1px;height:20px;background:#9b9b9b;"></div>
<div class="abs" style="left:957px;top:258px;width:92px;height:1px;background:#9b9b9b;"></div>
<div class="abs" style="left:957px;top:239px;width:1px;height:19px;background:#9b9b9b;"></div>
<div class="abs" style="left:1047px;top:239px;width:1px;height:19px;background:#9b9b9b;"></div>
<span class="t" style="left:998.22px;top:242.00px;font-size:14px;color:#1a1a1a;">F</span>
<div class="abs" style="left:9px;top:280px;width:19px;height:72px;background:#f2f2f2;"></div>
<div class="abs" style="left:8px;top:280px;width:1px;height:386px;background:#8c8c8c;"></div>
<div class="abs" style="left:9px;top:284px;width:2px;height:1px;background:#9a9a9a;"></div>
<div class="abs" style="left:9px;top:295px;width:7px;height:1px;background:#9a9a9a;"></div>
<div class="abs" style="left:9px;top:305px;width:2px;height:1px;background:#9a9a9a;"></div>
<div class="abs" style="left:9px;top:314px;width:16px;height:1px;background:#9a9a9a;"></div>
<div class="abs" style="left:9px;top:324px;width:2px;height:1px;background:#9a9a9a;"></div>
<div class="abs" style="left:9px;top:334px;width:7px;height:1px;background:#9a9a9a;"></div>
<div class="abs" style="left:9px;top:343px;width:2px;height:1px;background:#9a9a9a;"></div>
<span class="t" style="left:10px;top:322px;font-size:8.5px;color:#444;transform:rotate(-90deg);transform-origin:0 0;">1</span>
<div class="abs" style="left:9px;top:361px;width:2px;height:1px;background:#9a9a9a;"></div>
<div class="abs" style="left:9px;top:371px;width:7px;height:1px;background:#9a9a9a;"></div>
<div class="abs" style="left:9px;top:380px;width:2px;height:1px;background:#9a9a9a;"></div>
<div class="abs" style="left:9px;top:390px;width:19px;height:1px;background:#9a9a9a;"></div>
<span class="t" style="left:10px;top:397.5px;font-size:8.5px;color:#444;transform:rotate(-90deg);transform-origin:0 0;">1</span>
<div class="abs" style="left:9px;top:399px;width:2px;height:1px;background:#9a9a9a;"></div>
<div class="abs" style="left:9px;top:409px;width:7px;height:1px;background:#9a9a9a;"></div>
<div class="abs" style="left:9px;top:418px;width:2px;height:1px;background:#9a9a9a;"></div>
<div class="abs" style="left:9px;top:428px;width:19px;height:1px;background:#9a9a9a;"></div>
<span class="t" style="left:10px;top:435.5px;font-size:8.5px;color:#444;transform:rotate(-90deg);transform-origin:0 0;">2</span>
<div class="abs" style="left:9px;top:437px;width:2px;height:1px;background:#9a9a9a;"></div>
<div class="abs" style="left:9px;top:446px;width:7px;height:1px;background:#9a9a9a;"></div>
<div class="abs" style="left:9px;top:456px;width:2px;height:1px;background:#9a9a9a;"></div>
<div class="abs" style="left:9px;top:465px;width:19px;height:1px;background:#9a9a9a;"></div>
<span class="t" style="left:10px;top:472.5px;font-size:8.5px;color:#444;transform:rotate(-90deg);transform-origin:0 0;">3</span>
<div class="abs" style="left:9px;top:475px;width:2px;height:1px;background:#9a9a9a;"></div>
<div class="abs" style="left:9px;top:484px;width:7px;height:1px;background:#9a9a9a;"></div>
<div class="abs" style="left:9px;top:494px;width:2px;height:1px;background:#9a9a9a;"></div>
<div class="abs" style="left:9px;top:503px;width:19px;height:1px;background:#9a9a9a;"></div>
<span class="t" style="left:10px;top:510.5px;font-size:8.5px;color:#444;transform:rotate(-90deg);transform-origin:0 0;">4</span>
<div class="abs" style="left:9px;top:513px;width:2px;height:1px;background:#9a9a9a;"></div>
<div class="abs" style="left:9px;top:522px;width:7px;height:1px;background:#9a9a9a;"></div>
<div class="abs" style="left:9px;top:532px;width:2px;height:1px;background:#9a9a9a;"></div>
<div class="abs" style="left:9px;top:541px;width:19px;height:1px;background:#9a9a9a;"></div>
<span class="t" style="left:10px;top:548.5px;font-size:8.5px;color:#444;transform:rotate(-90deg);transform-origin:0 0;">5</span>
<div class="abs" style="left:9px;top:550px;width:2px;height:1px;background:#9a9a9a;"></div>
<div class="abs" style="left:9px;top:560px;width:7px;height:1px;background:#9a9a9a;"></div>
<div class="abs" style="left:9px;top:569px;width:2px;height:1px;background:#9a9a9a;"></div>
<div class="abs" style="left:9px;top:579px;width:19px;height:1px;background:#9a9a9a;"></div>
<span class="t" style="left:10px;top:586.5px;font-size:8.5px;color:#444;transform:rotate(-90deg);transform-origin:0 0;">6</span>
<div class="abs" style="left:9px;top:588px;width:2px;height:1px;background:#9a9a9a;"></div>
<div class="abs" style="left:9px;top:598px;width:7px;height:1px;background:#9a9a9a;"></div>
<div class="abs" style="left:9px;top:607px;width:2px;height:1px;background:#9a9a9a;"></div>
<div class="abs" style="left:9px;top:617px;width:19px;height:1px;background:#9a9a9a;"></div>
<span class="t" style="left:10px;top:624.5px;font-size:8.5px;color:#444;transform:rotate(-90deg);transform-origin:0 0;">7</span>
<div class="abs" style="left:9px;top:626px;width:2px;height:1px;background:#9a9a9a;"></div>
<div class="abs" style="left:9px;top:635px;width:7px;height:1px;background:#9a9a9a;"></div>
<div class="abs" style="left:9px;top:645px;width:2px;height:1px;background:#9a9a9a;"></div>
<div class="abs" style="left:9px;top:654px;width:19px;height:1px;background:#9a9a9a;"></div>
<span class="t" style="left:10px;top:661.5px;font-size:8.5px;color:#444;transform:rotate(-90deg);transform-origin:0 0;">8</span>
<div class="abs" style="left:9px;top:664px;width:2px;height:1px;background:#9a9a9a;"></div>
<div class="abs" style="left:9px;top:673px;width:7px;height:1px;background:#9a9a9a;"></div>
<div class="abs" style="left:9px;top:683px;width:2px;height:1px;background:#9a9a9a;"></div>
<div class="abs" style="left:38px;top:351px;width:28px;height:1px;background:#9b9b9b;"></div>
<div class="abs" style="left:65px;top:351px;width:1px;height:315px;background:#9b9b9b;"></div>
<div class="abs" style="left:38px;top:393px;width:27px;height:1px;background:#b4b4b4;"></div>
<div class="abs" style="left:38px;top:414px;width:27px;height:1px;background:#b4b4b4;"></div>
<div class="abs" style="left:38px;top:435px;width:27px;height:1px;background:#b4b4b4;"></div>
<div class="abs" style="left:38px;top:456px;width:27px;height:1px;background:#b4b4b4;"></div>
<div class="abs" style="left:38px;top:477px;width:27px;height:1px;background:#b4b4b4;"></div>
<div class="abs" style="left:38px;top:498px;width:27px;height:1px;background:#b4b4b4;"></div>
<div class="abs" style="left:38px;top:519px;width:27px;height:1px;background:#b4b4b4;"></div>
<div class="abs" style="left:38px;top:540px;width:27px;height:1px;background:#b4b4b4;"></div>
<div class="abs" style="left:38px;top:561px;width:27px;height:1px;background:#b4b4b4;"></div>
<div class="abs" style="left:38px;top:582px;width:27px;height:1px;background:#b4b4b4;"></div>
<div class="abs" style="left:38px;top:603px;width:27px;height:1px;background:#b4b4b4;"></div>
<div class="abs" style="left:38px;top:624px;width:27px;height:1px;background:#b4b4b4;"></div>
<div class="abs" style="left:38px;top:645px;width:27px;height:1px;background:#b4b4b4;"></div>
<div class="abs" style="left:38px;top:666px;width:27px;height:1px;background:#b4b4b4;"></div>
<div class="abs" style="left:38px;top:520px;width:27px;height:20px;background:#d2d2d2;"></div>
<div class="abs" style="left:64px;top:519px;width:2px;height:22px;background:#217346;"></div>
<div class="abs" style="left:9px;top:520px;width:10px;height:21px;background:#c4c4c4;"></div>
<div class="abs" style="left:19px;top:520px;width:9px;height:21px;background:#d6d6d6;"></div>
<span class="t" style="left:47.17px;top:377.00px;font-size:14.5px;color:#111;letter-spacing:-0.6px;">1</span>
<span class="t" style="left:47.17px;top:398.00px;font-size:14.5px;color:#111;letter-spacing:-0.6px;">2</span>
<span class="t" style="left:47.17px;top:419.00px;font-size:14.5px;color:#111;letter-spacing:-0.6px;">3</span>
<span class="t" style="left:47.17px;top:440.00px;font-size:14.5px;color:#111;letter-spacing:-0.6px;">4</span>
<span class="t" style="left:47.17px;top:461.00px;font-size:14.5px;color:#111;letter-spacing:-0.6px;">5</span>
<span class="t" style="left:47.17px;top:482.00px;font-size:14.5px;color:#111;letter-spacing:-0.6px;">6</span>
<span class="t" style="left:47.17px;top:503.00px;font-size:14.5px;color:#111;letter-spacing:-0.6px;">7</span>
<span class="t" style="left:47.17px;top:524.00px;font-size:14.5px;color:#217346;letter-spacing:-0.6px;">8</span>
<span class="t" style="left:47.17px;top:545.00px;font-size:14.5px;color:#111;letter-spacing:-0.6px;">9</span>
<span class="t" style="left:43.44px;top:566.00px;font-size:14.5px;color:#111;letter-spacing:-0.6px;">10</span>
<span class="t" style="left:43.97px;top:587.00px;font-size:14.5px;color:#111;letter-spacing:-0.6px;">11</span>
<span class="t" style="left:43.44px;top:608.00px;font-size:14.5px;color:#111;letter-spacing:-0.6px;">12</span>
<span class="t" style="left:43.44px;top:629.00px;font-size:14.5px;color:#111;letter-spacing:-0.6px;">13</span>
<span class="t" style="left:43.44px;top:650.00px;font-size:14.5px;color:#111;letter-spacing:-0.6px;">14</span>
<div class="abs" style="left:86px;top:279px;width:796px;height:387px;background:#fff;border:1px solid #c9c9c9;border-bottom:0"></div>
<div class="abs" style="left:890px;top:279px;width:159px;height:387px;background:#f3f3f3;border:1px solid #d0d0d0;border-bottom:0;border-right-color:#e0e0e0"></div>
<div class="abs" style="left:957px;top:351px;width:1px;height:315px;background:#d6d6d6;"></div>
<div class="abs" style="left:1046px;top:351px;width:1px;height:315px;background:#e0e0e0;"></div>
<div class="abs" style="left:957px;top:351px;width:91px;height:1px;background:#dcdcdc;"></div>
<div class="abs" style="left:957px;top:393px;width:91px;height:1px;background:#d6d6d6;"></div>
<div class="abs" style="left:957px;top:414px;width:91px;height:1px;background:#d6d6d6;"></div>
<div class="abs" style="left:957px;top:435px;width:91px;height:1px;background:#d6d6d6;"></div>
<div class="abs" style="left:957px;top:456px;width:91px;height:1px;background:#d6d6d6;"></div>
<div class="abs" style="left:957px;top:477px;width:91px;height:1px;background:#d6d6d6;"></div>
<div class="abs" style="left:957px;top:498px;width:91px;height:1px;background:#d6d6d6;"></div>
<div class="abs" style="left:957px;top:519px;width:91px;height:1px;background:#d6d6d6;"></div>
<div class="abs" style="left:957px;top:540px;width:91px;height:1px;background:#d6d6d6;"></div>
<div class="abs" style="left:957px;top:561px;width:91px;height:1px;background:#d6d6d6;"></div>
<div class="abs" style="left:957px;top:582px;width:91px;height:1px;background:#d6d6d6;"></div>
<div class="abs" style="left:957px;top:603px;width:91px;height:1px;background:#d6d6d6;"></div>
<div class="abs" style="left:957px;top:624px;width:91px;height:1px;background:#d6d6d6;"></div>
<div class="abs" style="left:957px;top:645px;width:91px;height:1px;background:#d6d6d6;"></div>
<div class="abs" style="left:957px;top:666px;width:91px;height:1px;background:#d6d6d6;"></div>
<span class="t" style="left:338.00px;top:321.00px;font-size:21px;color:#b4b4b4;">Добавьте верхний колонтитул</span>
<div class="abs" style="left:153px;top:351px;width:646px;height:42px;background:#a9d08e;"></div>
<div class="abs" style="left:153px;top:351px;width:646px;height:1px;background:#9aa79a;"></div>
<div class="abs" style="left:153px;top:393px;width:292px;height:272px;background:#ffe699;"></div>
<div class="abs" style="left:445px;top:393px;width:95px;height:272px;background:#f2f2f2;"></div>
<div class="abs" style="left:153px;top:393px;width:646px;height:1px;background:#000;"></div>
<div class="abs" style="left:153px;top:414px;width:646px;height:1px;background:#000;"></div>
<div class="abs" style="left:153px;top:435px;width:646px;height:1px;background:#000;"></div>
<div class="abs" style="left:153px;top:456px;width:646px;height:1px;background:#000;"></div>
<div class="abs" style="left:153px;top:477px;width:646px;height:1px;background:#000;"></div>
<div class="abs" style="left:153px;top:498px;width:646px;height:1px;background:#000;"></div>
<div class="abs" style="left:153px;top:519px;width:646px;height:1px;background:#000;"></div>
<div class="abs" style="left:153px;top:540px;width:646px;height:1px;background:#000;"></div>
<div class="abs" style="left:153px;top:561px;width:646px;height:1px;background:#000;"></div>
<div class="abs" style="left:153px;top:582px;width:646px;height:1px;background:#000;"></div>
<div class="abs" style="left:153px;top:603px;width:646px;height:1px;background:#000;"></div>
<div class="abs" style="left:153px;top:624px;width:646px;height:1px;background:#000;"></div>
<div class="abs" style="left:153px;top:645px;width:646px;height:1px;background:#000;"></div>
<div class="abs" style="left:153px;top:666px;width:646px;height:1px;background:#000;"></div>
<div class="abs" style="left:153px;top:351px;width:1px;height:315px;background:#000;"></div>
<div class="abs" style="left:444px;top:352px;width:1px;height:314px;background:#000;"></div>
<div class="abs" style="left:539px;top:352px;width:1px;height:314px;background:#000;"></div>
<div class="abs" style="left:617px;top:352px;width:1px;height:314px;background:#000;"></div>
<div class="abs" style="left:709px;top:352px;width:1px;height:314px;background:#000;"></div>
<div class="abs" style="left:798px;top:352px;width:1px;height:314px;background:#8a8a8a;"></div>
<span class="t" style="left:246.00px;top:366.00px;font-size:14px;color:#000;letter-spacing:0.299px;font-weight:bold;">Наименование</span>
<span class="t" style="left:479.50px;top:366.00px;font-size:14px;color:#000;letter-spacing:-0.580px;font-weight:bold;">Пол</span>
<span class="t" style="left:544.50px;top:357.00px;font-size:14px;color:#000;letter-spacing:0.278px;font-weight:bold;">Продано,</span>
<span class="t" style="left:567.50px;top:377.00px;font-size:14px;color:#000;letter-spacing:0.158px;font-weight:bold;">шт.</span>
<span class="t" style="left:627.50px;top:366.00px;font-size:14px;color:#000;letter-spacing:0.289px;font-weight:bold;">Цена, руб.</span>
<span class="t" style="left:733.50px;top:366.00px;font-size:14px;color:#000;letter-spacing:-0.121px;font-weight:bold;">Итого</span>
<span class="t" style="left:157.00px;top:398.00px;font-size:14px;color:#000;letter-spacing:0.37px;">Кроссовки беговые, размер 35</span>
<span class="t" style="left:462.50px;top:398.00px;font-size:14.5px;color:#000;letter-spacing:0.573px;">женский</span>
<span class="t" style="left:590.54px;top:398.00px;font-size:14px;color:#000;letter-spacing:0.3px;">221</span>
<span class="t" style="left:670.27px;top:398.00px;font-size:14px;color:#000;letter-spacing:0.3px;">3 190</span>
<span class="t" style="left:743.59px;top:398.00px;font-size:14px;color:#000;letter-spacing:0.3px;">704 990</span>
<span class="t" style="left:157.00px;top:419.00px;font-size:14px;color:#000;letter-spacing:0.37px;">Кроссовки беговые, размер 39</span>
<span class="t" style="left:462.50px;top:419.00px;font-size:14.5px;color:#000;letter-spacing:0.306px;">мужской</span>
<span class="t" style="left:590.54px;top:419.00px;font-size:14px;color:#000;letter-spacing:0.3px;">400</span>
<span class="t" style="left:670.27px;top:419.00px;font-size:14px;color:#000;letter-spacing:0.3px;">6 990</span>
<span class="t" style="left:731.32px;top:419.00px;font-size:14px;color:#000;letter-spacing:0.3px;">2 796 000</span>
<span class="t" style="left:157.00px;top:440.00px;font-size:14px;color:#000;letter-spacing:0.37px;">Кроссовки для баскетбола, размер 39</span>
<span class="t" style="left:462.50px;top:440.00px;font-size:14.5px;color:#000;letter-spacing:0.573px;">женский</span>
<span class="t" style="left:598.63px;top:440.00px;font-size:14px;color:#000;letter-spacing:0.3px;">98</span>
<span class="t" style="left:674.46px;top:440.00px;font-size:14px;color:#000;letter-spacing:0.3px;">5990</span>
<span class="t" style="left:743.59px;top:440.00px;font-size:14px;color:#000;letter-spacing:0.3px;">587 020</span>
<span class="t" style="left:157.00px;top:461.00px;font-size:14px;color:#000;letter-spacing:0.37px;">Кроссовки для баскетбола, размер 43</span>
<span class="t" style="left:462.50px;top:461.00px;font-size:14.5px;color:#000;letter-spacing:0.306px;">мужской</span>
<span class="t" style="left:590.54px;top:461.00px;font-size:14px;color:#000;letter-spacing:0.3px;">334</span>
<span class="t" style="left:674.46px;top:461.00px;font-size:14px;color:#000;letter-spacing:0.3px;">5890</span>
<span class="t" style="left:731.32px;top:461.00px;font-size:14px;color:#000;letter-spacing:0.3px;">1 967 260</span>
<span class="t" style="left:157.00px;top:482.00px;font-size:14px;color:#000;letter-spacing:0.37px;">Кроссовки беговые, размер 40</span>
<span class="t" style="left:462.50px;top:482.00px;font-size:14.5px;color:#000;letter-spacing:0.573px;">женский</span>
<span class="t" style="left:590.54px;top:482.00px;font-size:14px;color:#000;letter-spacing:0.3px;">321</span>
<span class="t" style="left:670.27px;top:482.00px;font-size:14px;color:#000;letter-spacing:0.3px;">6 490</span>
<span class="t" style="left:731.32px;top:482.00px;font-size:14px;color:#000;letter-spacing:0.3px;">2 083 290</span>
<span class="t" style="left:157.00px;top:503.00px;font-size:14px;color:#000;letter-spacing:0.37px;">Кроссовки беговые, размер 40</span>
<span class="t" style="left:462.50px;top:503.00px;font-size:14.5px;color:#000;letter-spacing:0.306px;">мужской</span>
<span class="t" style="left:590.54px;top:503.00px;font-size:14px;color:#000;letter-spacing:0.3px;">500</span>
<span class="t" style="left:670.27px;top:503.00px;font-size:14px;color:#000;letter-spacing:0.3px;">6 990</span>
<span class="t" style="left:731.32px;top:503.00px;font-size:14px;color:#000;letter-spacing:0.3px;">3 495 000</span>
<span class="t" style="left:157.00px;top:524.00px;font-size:14px;color:#000;letter-spacing:0.37px;">Кроссовки беговые, размер 41</span>
<span class="t" style="left:462.50px;top:524.00px;font-size:14.5px;color:#000;letter-spacing:0.306px;">мужской</span>
<span class="t" style="left:590.54px;top:524.00px;font-size:14px;color:#000;letter-spacing:0.3px;">664</span>
<span class="t" style="left:670.27px;top:524.00px;font-size:14px;color:#000;letter-spacing:0.3px;">6 990</span>
<span class="t" style="left:731.32px;top:524.00px;font-size:14px;color:#000;letter-spacing:0.3px;">4 641 360</span>
<span class="t" style="left:157.00px;top:545.00px;font-size:14px;color:#000;letter-spacing:0.37px;">Кроссовки теннисные, размер 41</span>
<span class="t" style="left:462.50px;top:545.00px;font-size:14.5px;color:#000;letter-spacing:0.306px;">мужской</span>
<span class="t" style="left:590.54px;top:545.00px;font-size:14px;color:#000;letter-spacing:0.3px;">553</span>
<span class="t" style="left:670.27px;top:545.00px;font-size:14px;color:#000;letter-spacing:0.3px;">7 990</span>
<span class="t" style="left:731.32px;top:545.00px;font-size:14px;color:#000;letter-spacing:0.3px;">4 418 470</span>
<span class="t" style="left:157.00px;top:566.00px;font-size:14px;color:#000;letter-spacing:0.37px;">Кроссовки теннисные, размер 42</span>
<span class="t" style="left:462.50px;top:566.00px;font-size:14.5px;color:#000;letter-spacing:0.306px;">мужской</span>
<span class="t" style="left:590.54px;top:566.00px;font-size:14px;color:#000;letter-spacing:0.3px;">123</span>
<span class="t" style="left:670.27px;top:566.00px;font-size:14px;color:#000;letter-spacing:0.3px;">7 990</span>
<span class="t" style="left:743.59px;top:566.00px;font-size:14px;color:#000;letter-spacing:0.3px;">982 770</span>
<span class="t" style="left:157.00px;top:587.00px;font-size:14px;color:#000;letter-spacing:0.37px;">Кроссовки беговые, размер 42</span>
<span class="t" style="left:462.50px;top:587.00px;font-size:14.5px;color:#000;letter-spacing:0.306px;">мужской</span>
<span class="t" style="left:590.54px;top:587.00px;font-size:14px;color:#000;letter-spacing:0.3px;">334</span>
<span class="t" style="left:670.27px;top:587.00px;font-size:14px;color:#000;letter-spacing:0.3px;">6 990</span>
<span class="t" style="left:731.32px;top:587.00px;font-size:14px;color:#000;letter-spacing:0.3px;">2 334 660</span>
<span class="t" style="left:157.00px;top:608.00px;font-size:14px;color:#000;letter-spacing:0.37px;">Кроссовки беговые, размер 44</span>
<span class="t" style="left:462.50px;top:608.00px;font-size:14.5px;color:#000;letter-spacing:0.306px;">мужской</span>
<span class="t" style="left:590.54px;top:608.00px;font-size:14px;color:#000;letter-spacing:0.3px;">222</span>
<span class="t" style="left:670.27px;top:608.00px;font-size:14px;color:#000;letter-spacing:0.3px;">6 990</span>
<span class="t" style="left:731.32px;top:608.00px;font-size:14px;color:#000;letter-spacing:0.3px;">1 551 780</span>
<span class="t" style="left:157.00px;top:629.00px;font-size:14px;color:#000;letter-spacing:0.37px;">Кроссовки беговые, размер 45</span>
<span class="t" style="left:462.50px;top:629.00px;font-size:14.5px;color:#000;letter-spacing:0.306px;">мужской</span>
<span class="t" style="left:590.54px;top:629.00px;font-size:14px;color:#000;letter-spacing:0.3px;">221</span>
<span class="t" style="left:670.27px;top:629.00px;font-size:14px;color:#000;letter-spacing:0.3px;">6 990</span>
<span class="t" style="left:731.32px;top:629.00px;font-size:14px;color:#000;letter-spacing:0.3px;">1 544 790</span>
<span class="t" style="left:157.00px;top:650.00px;font-size:14px;color:#000;letter-spacing:0.37px;">Кроссовки теннисные, размер 38</span>
<span class="t" style="left:462.50px;top:650.00px;font-size:14.5px;color:#000;letter-spacing:0.573px;">женский</span>
<span class="t" style="left:590.54px;top:650.00px;font-size:14px;color:#000;letter-spacing:0.3px;">443</span>
<span class="t" style="left:670.27px;top:650.00px;font-size:14px;color:#000;letter-spacing:0.3px;">7 990</span>
<span class="t" style="left:731.32px;top:650.00px;font-size:14px;color:#000;letter-spacing:0.3px;">3 539 570</span>
</div></div>
<svg class="abs" style="left:1053px;top:204px" width="15" height="461" shape-rendering="crispEdges"><defs><pattern id="pk" width="4" height="8" patternUnits="userSpaceOnUse"><rect width="4" height="8" fill="#d9d9d9"/><rect x="1" y="1" width="1" height="1" fill="#e8e8e8"/><rect x="3" y="5" width="1" height="1" fill="#e8e8e8"/></pattern></defs><rect width="15" height="461" fill="url(#pk)"/></svg>
<div class="abs" style="left:1053px;top:204px;width:15px;height:15px;background:#fff;border:1px solid #ababab"></div>
<svg class="abs" style="left:1057px;top:209px;" width="7" height="4" viewBox="0 0 7 4"><path d="M0 4L3.5 0L7 4Z" fill="#5e5e5e"/></svg>
<div class="abs" style="left:1053px;top:219px;width:15px;height:93px;background:#fff;border:1px solid #ababab"></div>
<div class="abs" style="left:1053px;top:651px;width:15px;height:15px;background:#fff;border:1px solid #ababab"></div>
<svg class="abs" style="left:1057px;top:657px;" width="7" height="4" viewBox="0 0 7 4"><path d="M0 0H7L3.5 4Z" fill="#5e5e5e"/></svg>
<!-- TAB BAR + STATUS -->
<svg class="abs" style="left:0px;top:665px" width="1071" height="28" shape-rendering="crispEdges"><defs><pattern id="pd2" width="4" height="8" patternUnits="userSpaceOnUse"><rect width="4" height="8" fill="#e6e6e6"/><rect x="1" y="1" width="1" height="1" fill="#d8d8d8"/><rect x="3" y="5" width="1" height="1" fill="#d8d8d8"/></pattern></defs><rect width="1071" height="28" fill="url(#pd2)"/></svg>
<div class="abs" style="left:0px;top:665px;width:1049px;height:1px;background:#9f9f9f;"></div>
<div class="abs" style="left:98px;top:665px;width:107px;height:22.5px;background:#fff;border-left:1px solid #c6c6c6;border-right:1px solid #c6c6c6"></div>
<div class="abs" style="left:98px;top:687.5px;width:107px;height:2px;background:#217346;"></div>
<span class="t" style="left:110.50px;top:673.00px;font-size:13.16px;color:#217346;letter-spacing:-0.299px;font-weight:bold;">microexcel.ru</span>
<svg class="abs" style="left:25px;top:675px;" width="5" height="8" viewBox="0 0 5 8"><path d="M5 0V8L0 4Z" fill="#c2c2c2"/></svg>
<svg class="abs" style="left:54px;top:675px;" width="5" height="8" viewBox="0 0 5 8"><path d="M0 0V8L5 4Z" fill="#c2c2c2"/></svg>
<svg class="abs" style="left:238px;top:671px;" width="16" height="16" viewBox="0 0 16 16"><circle cx="8" cy="8" r="7.3" fill="none" stroke="#6a6a6a" stroke-width="1.2"/><path d="M8 4V12M4 8H12" stroke="#6a6a6a" stroke-width="1.6"/></svg>
<div class="abs" style="left:642px;top:674px;width:2px;height:2px;background:#a6a6a6;"></div>
<div class="abs" style="left:642px;top:678px;width:2px;height:2px;background:#a6a6a6;"></div>
<div class="abs" style="left:642px;top:682px;width:2px;height:2px;background:#a6a6a6;"></div>
<svg class="abs" style="left:659px;top:672px" width="393" height="15" shape-rendering="crispEdges"><defs><pattern id="pk2" width="4" height="8" patternUnits="userSpaceOnUse"><rect width="4" height="8" fill="#d9d9d9"/><rect x="1" y="1" width="1" height="1" fill="#e8e8e8"/><rect x="3" y="5" width="1" height="1" fill="#e8e8e8"/></pattern></defs><rect width="393" height="15" fill="url(#pk2)"/></svg>
<div class="abs" style="left:659px;top:672px;width:15px;height:15px;background:#fff;border:1px solid #ababab"></div>
<svg class="abs" style="left:664px;top:676px;" width="4" height="7" viewBox="0 0 4 7"><path d="M4 0V7L0 3.5Z" fill="#5e5e5e"/></svg>
<div class="abs" style="left:674px;top:672px;width:315px;height:15px;background:#fff;border:1px solid #ababab"></div>
<div class="abs" style="left:1037px;top:672px;width:15px;height:15px;background:#fff;border:1px solid #ababab"></div>
<svg class="abs" style="left:1043px;top:676px;" width="4" height="7" viewBox="0 0 4 7"><path d="M0 0V7L4 3.5Z" fill="#5e5e5e"/></svg>
<div class="abs" style="left:0px;top:692.5px;width:1071px;height:21.5px;background:#f3f3f3;border-top:1px solid #c9c9c9"></div>
<span class="t" style="left:5.50px;top:699.00px;font-size:11.98px;color:#262626;letter-spacing:-0.299px;">Готово</span>
<svg class="abs" style="left:62px;top:697px;" width="14" height="14" viewBox="0 0 14 14"><rect x="2.5" y="2.5" width="11" height="11" fill="#fff" stroke="#6a6a6a"/><path d="M2.5 6H13.5M2.5 8.5H13.5M2.5 11H13.5M6 6V13.5M9.7 6V13.5" stroke="#6a6a6a" stroke-width="0.9"/><circle cx="3.2" cy="3.2" r="3.2" fill="#5e5e5e"/></svg>
<svg class="abs" style="left:783px;top:697px;" width="14" height="14" viewBox="0 0 14 14"><rect x="0.5" y="0.5" width="13" height="13" fill="none" stroke="#6a6a6a"/><path d="M0.5 4.5H13.5M0.5 9.5H13.5M4.5 0.5V13.5M9.5 0.5V13.5" stroke="#6a6a6a"/></svg>
<svg class="abs" style="left:809px;top:693.5px" width="38" height="20.5" shape-rendering="crispEdges"><defs><pattern id="pk3" width="4" height="8" patternUnits="userSpaceOnUse"><rect width="4" height="8" fill="#d4d4d4"/><rect x="1" y="1" width="1" height="1" fill="#c0c0c0"/><rect x="3" y="5" width="1" height="1" fill="#c0c0c0"/></pattern></defs><rect width="38" height="20.5" fill="url(#pk3)"/></svg>
<svg class="abs" style="left:821px;top:697px;" width="14" height="14" viewBox="0 0 14 14"><rect x="0.5" y="0.5" width="13" height="13" fill="none" stroke="#5e5e5e"/><rect x="3.5" y="3.5" width="7" height="7" fill="none" stroke="#5e5e5e"/><path d="M5 5.5H9M5 7.5H9" stroke="#5e5e5e" stroke-width="1"/></svg>
<svg class="abs" style="left:859px;top:697px;" width="14" height="14" viewBox="0 0 14 14"><rect x="0.5" y="0.5" width="13" height="13" fill="none" stroke="#6a6a6a"/><path d="M0.5 8.5H9.5V0.5M4.5 0.5V8.5" fill="none" stroke="#6a6a6a"/></svg>
<div class="abs" style="left:890px;top:703px;width:6px;height:1.6px;background:#5e5e5e;"></div>
<div class="abs" style="left:900px;top:703.5px;width:100px;height:1px;background:#8a8a8a;"></div>
<div class="abs" style="left:948px;top:698px;width:5px;height:11px;background:#5e5e5e;"></div>
<div class="abs" style="left:1003.5px;top:703px;width:7px;height:1.6px;background:#5e5e5e;"></div>
<div class="abs" style="left:1006.2px;top:700.3px;width:1.6px;height:7px;background:#5e5e5e;"></div>
<span class="t" style="left:1023.00px;top:698.00px;font-size:10.65px;color:#262626;letter-spacing:-0.299px;">100 %</span>
</body>
</html>
